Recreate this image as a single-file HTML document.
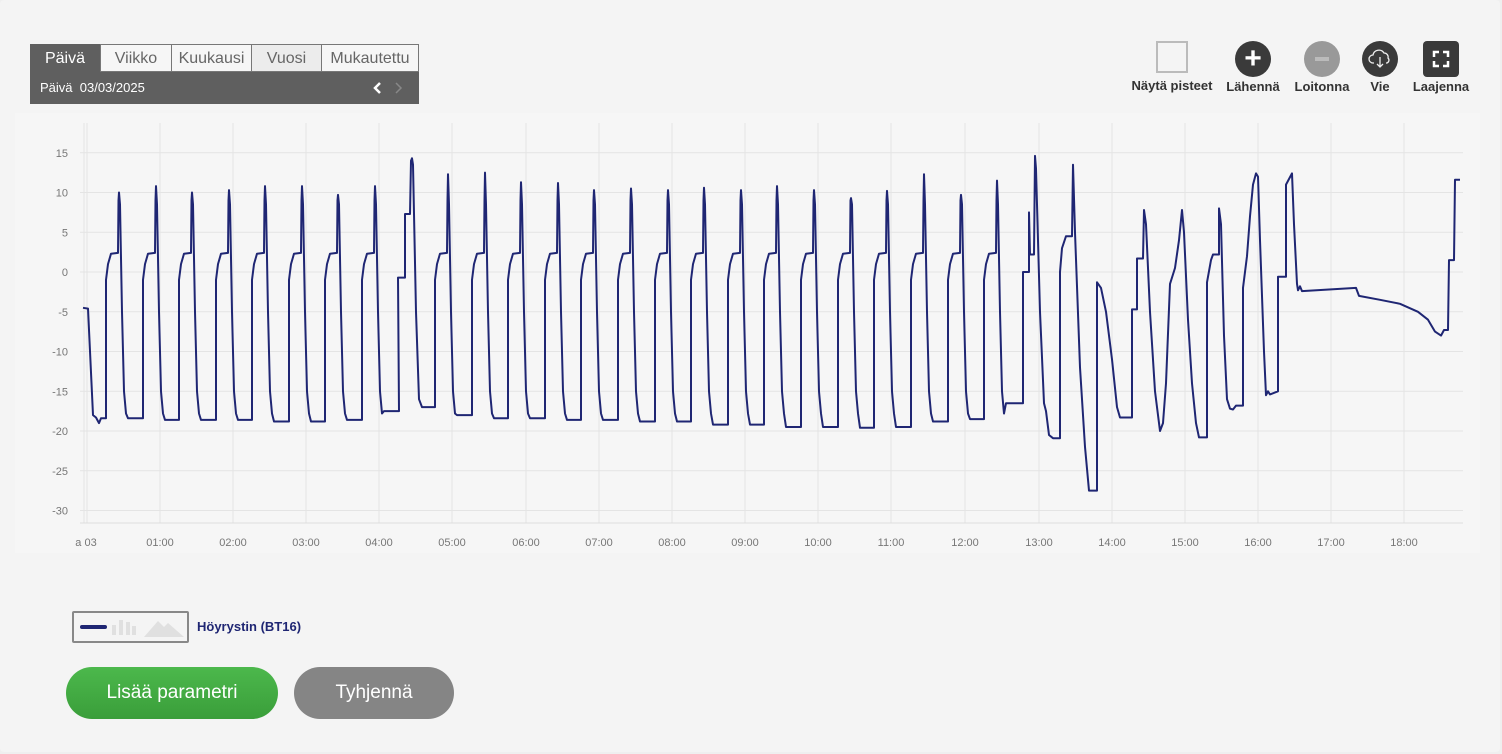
<!DOCTYPE html>
<html><head><meta charset="utf-8"><style>
body{margin:0;width:1502px;height:754px;background:#efefef;font-family:"Liberation Sans",Arial,sans-serif;overflow:hidden;position:relative}
.panel{position:absolute;left:0;top:0;width:1500px;height:752px;background:#f4f4f4;border-radius:4px}
.tabs{position:absolute;left:30px;top:44px;width:389px;height:60px;background:#5f5f5f}
.tab{position:absolute;top:0;height:28px;line-height:28px;text-align:center;font-size:16px;color:#666;background:#f6f6f6;border:1px solid #777;box-sizing:border-box}
.sub{position:absolute;left:10px;top:36px;font-size:13px;color:#fff}
.tool{position:absolute;top:41px;text-align:center;font-size:13px;font-weight:bold;color:#333}
.btn{position:absolute;top:667px;height:52px;border-radius:26px;color:#fff;font-size:19px;text-align:center;line-height:52px}
</style></head><body>
<div class="panel"></div>
<div class="tabs">
<div class="tab" style="left:0;width:70px;background:#5f5f5f;color:#fff;border-color:#5f5f5f">Päivä</div>
<div class="tab" style="left:70px;width:72px">Viikko</div>
<div class="tab" style="left:141px;width:81px">Kuukausi</div>
<div class="tab" style="left:221px;width:71px;background:#ececec">Vuosi</div>
<div class="tab" style="left:291px;width:98px">Mukautettu</div>
<div class="sub">Päivä&nbsp;&nbsp;03/03/2025</div>
<svg style="position:absolute;left:342px;top:37px" width="40" height="14"><path d="M8 2L3 7l5 5" fill="none" stroke="#fff" stroke-width="2.5"/><path d="M24 2l5 5-5 5" fill="none" stroke="#888" stroke-width="1.5"/></svg>
</div>
<div class="tool" style="left:1127px;width:90px"><div style="width:28px;height:28px;border:2px solid #bbb;margin:0 auto 5px"></div>Näytä pisteet</div>
<div class="tool" style="left:1224px;width:58px"><div style="width:36px;height:36px;border-radius:50%;background:#3a3a3a;margin:0 auto 2px;color:#fff;font-size:30px;line-height:36px">+</div>Lähennä</div>
<div class="tool" style="left:1292px;width:60px"><div style="width:36px;height:36px;border-radius:50%;background:#999;margin:0 auto 2px;position:relative"><div style="position:absolute;left:11px;top:16px;width:14px;height:4px;background:#bbb"></div></div>Loitonna</div>
<div class="tool" style="left:1358px;width:44px"><div style="width:36px;height:36px;border-radius:50%;background:#3a3a3a;margin:0 auto 2px"><svg width="36" height="36" viewBox="0 0 36 36"><path d="M12 22h-1a4 4 0 0 1 0-8 6 6 0 0 1 11-2 4 4 0 0 1 4 5 3 3 0 0 1-1 5h-1M18 16v10M15 23l3 3 3-3" fill="none" stroke="#eee" stroke-width="1.3"/></svg></div>Vie</div>
<div class="tool" style="left:1408px;width:66px"><div style="width:36px;height:36px;border-radius:4px;background:#3a3a3a;margin:0 auto 2px"><svg width="36" height="36"><path d="M11 16v-5h5M20 11h5v5M25 20v5h-5M16 25h-5v-5" fill="none" stroke="#fff" stroke-width="2.5"/></svg></div>Laajenna</div>

<svg style="position:absolute;left:0;top:0" width="1502" height="600">
<rect x="15" y="113" width="1465" height="440" fill="#f6f6f6"/>
<g id="grid" stroke="#e4e4e4" stroke-width="1"></g>
<line x1="80" y1="523" x2="1463" y2="523" stroke="#ddd"/>
<g id="lab" font-size="11" fill="#777" font-family="Liberation Sans"></g>
<path id="p" fill="none" stroke="#1f2673" stroke-width="2" stroke-linejoin="round"/>
</svg>

<div style="position:absolute;left:72px;top:611px;width:113px;height:28px;border:2px solid #888;border-radius:2px;background:#f4f4f4">
<div style="position:absolute;left:6px;top:12px;width:27px;height:4px;border-radius:2px;background:#1f2673"></div>
<div style="position:absolute;left:38px;top:12px;width:4px;height:10px;background:#e0e0e0"></div>
<div style="position:absolute;left:45px;top:7px;width:4px;height:15px;background:#e0e0e0"></div>
<div style="position:absolute;left:52px;top:9px;width:4px;height:13px;background:#e0e0e0"></div>
<div style="position:absolute;left:58px;top:13px;width:4px;height:9px;background:#e0e0e0"></div>
<svg style="position:absolute;left:70px;top:4px" width="40" height="20"><path d="M0 20L14 4l6 6 4-4 16 14z" fill="#e0e0e0"/></svg>
</div>
<div style="position:absolute;left:197px;top:619px;font-size:13px;font-weight:bold;color:#1f2673">Höyrystin (BT16)</div>
<div class="btn" style="left:66px;width:212px;background:linear-gradient(#4cb84c,#3a9e3a)">Lisää parametri</div>
<div class="btn" style="left:294px;width:160px;background:#858585">Tyhjennä</div>

<script>
const Y=v=>(272-7.95*v).toFixed(1);
let g='',l='';
for(let v=15;v>=-30;v-=5){const y=Y(v);g+=`<line x1="80" y1="${y}" x2="1463" y2="${y}"/>`;l+=`<text x="68" y="${+y+4}" text-anchor="end">${v}</text>`;}
const hx=[87,160,233,306,379,452,526,599,672,745,818,891,965,1039,1112,1185,1258,1331,1404];
hx.forEach((x,i)=>{g+=`<line x1="${x}" y1="123" x2="${x}" y2="523"/>`;l+=`<text x="${x+(i?0:-1)}" y="546" text-anchor="middle">${i?String(i).padStart(2,'0')+':00':'a 03'}</text>`});
g+=`<line x1="84" y1="123" x2="84" y2="523"/>`;
document.getElementById('grid').innerHTML=g;document.getElementById('lab').innerHTML=l;
let pts=[[83,-4.5],[88,-4.6],[93,-18],[96,-18.3],[99,-19],[101,-18.4],[106,-18.4]];
const peaks=[[119,10],[156,10.8],[192,10],[229,10.3],[265,10.8],[302,10.8],[338,9.7],[375,10.8],[412,14.3],[448,12.3],[485,12.5],[521,11.3],[558,11.2],[594,10.3],[631,10.5],[668,10.3],[704,10.6],[741,10.3],[777,10.8],[814,10.3],[851,9.3],[887,10.2],[924,12.3],[961,9.7],[997,11.5]];
const lows=[-18.4,-18.6,-18.6,-18.6,-18.8,-18.8,-18.6,-17.5,-17,-18,-18.4,-18.4,-18.6,-18.6,-18.8,-18.8,-19.2,-19.2,-19.5,-19.5,-19.6,-19.5,-18.8,-18.5,-16.5];
peaks.forEach(([p,v],i)=>{
 if(p==412){pts.push([398,-0.7],[405,-0.7],[405,7.3],[410,7.3],[411,14],[412,14.3],[413,13.5],[416,-5],[419,-16],[422,-17]);}
 else{pts.push([p-13,-1],[p-11,1],[p-8,2.3],[p-1,2.4],[p-0.5,9],[p,v],[p+1,8.5],[p+3,-5],[p+5,-15],[p+7,-17.8],[p+9,lows[i]]);}
 const nx=i+1<peaks.length?peaks[i+1][0]-13:1023;
 pts.push([nx,lows[i]]);
});
pts.push([1023,0],[1029,0],[1029,7.5],[1030,2.2],[1034,2.2],[1035,14.6],[1036,13],[1040,-5],[1044,-16.5],[1046,-17.5],[1049,-20.5],[1053,-20.9],[1060,-20.9],[1060,0],[1062,3],[1066,4.5],[1072,4.5],[1073,13.5],[1075,5],[1080,-12],[1085,-22],[1089,-27.5],[1097,-27.5],[1097,-1.3],[1101,-2],[1106,-5],[1112,-11],[1117,-17],[1120,-18.3],[1132,-18.3],[1132,-4.7],[1137,-4.7],[1137,1.7],[1143,1.7],[1144,7.8],[1146,6],[1150,-5],[1155,-15],[1160,-20],[1163,-19],[1166,-14],[1170,-1.5],[1175,0.5],[1179,4],[1182,7.8],[1184,5],[1188,-6],[1192,-14],[1196,-19],[1199,-20.8],[1207,-20.8],[1207,-1.3],[1211,1.5],[1213,2.2],[1219,2.2],[1219,8],[1221,6],[1224,-8],[1227,-16],[1230,-17.2],[1233,-17.3],[1236,-16.8],[1243,-16.8],[1243,-2],[1247,2],[1250,7],[1253,11],[1256,12.4],[1258,12],[1260,4],[1264,-10],[1266,-15.5],[1268,-15],[1270,-15.4],[1278,-15],[1278,-0.6],[1286,-0.6],[1286,11],[1292,12.4],[1294,6],[1297,-1.5],[1298,-2.3],[1300,-1.8],[1302,-2.4],[1356,-2],[1359,-3],[1380,-3.5],[1400,-4],[1418,-5],[1428,-6],[1435,-7.5],[1441,-8],[1444,-7.3],[1448,-7.3],[1449,1.5],[1454,1.5],[1455,11.6],[1460,11.6]);
document.getElementById('p').setAttribute('d','M'+pts.map(q=>q[0]+' '+Y(q[1])).join('L'));
</script>
</body></html>
